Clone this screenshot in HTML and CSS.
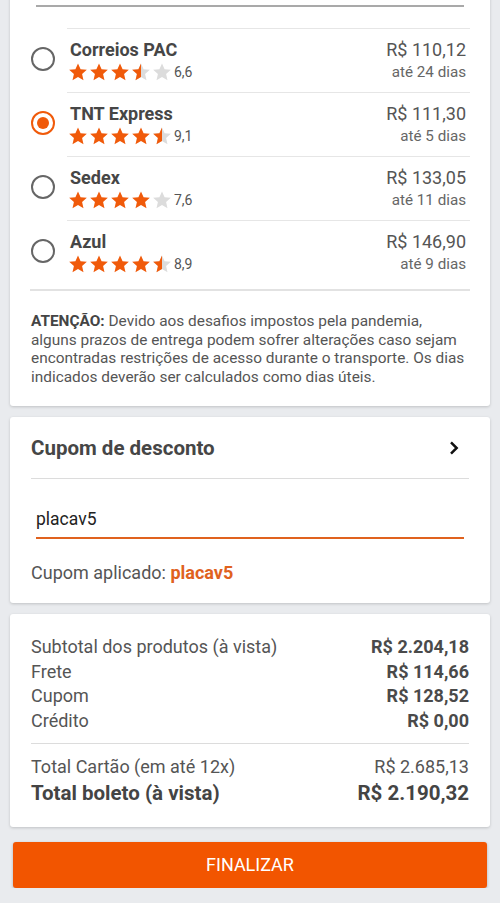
FILE: index.html
```html
<!DOCTYPE html>
<html lang="pt-BR">
<head>
  <meta charset="UTF-8">
  <meta name="viewport" content="width=device-width, initial-scale=1.0">
  <title>Finalizar pedido</title>
  <link rel="stylesheet" href="styles.css">
</head>
<body>

<svg width="0" height="0" class="defs">
  <defs>
    <symbol id="star" viewBox="0 0 24 24">
      <path d="M12 1.8l3.1 6.9 7.5.7-5.7 5 1.7 7.4L12 17.9l-6.6 3.9 1.7-7.4-5.7-5 7.5-.7z"/>
    </symbol>
    <clipPath id="half"><rect x="0" y="0" width="12" height="24"/></clipPath>
  </defs>
</svg>

<div class="page">

  <div class="card shipping">
    <div class="top-line"></div>

    <div class="ship-row">
      <span class="radio"></span>
      <div class="ship-info">
        <div class="ship-left">
          <div class="ship-name">Correios PAC</div>
          <div class="stars">
            <svg class="star on"><use href="#star"/></svg>
            <svg class="star on"><use href="#star"/></svg>
            <svg class="star on"><use href="#star"/></svg>
            <svg class="star half" viewBox="0 0 24 24"><use href="#star" class="off-fill"/><g clip-path="url(#half)"><use href="#star" class="on-fill"/></g></svg>
            <svg class="star"><use href="#star"/></svg>
            <span class="rate">6,6</span>
          </div>
        </div>
        <div class="ship-right">
          <div class="price">R$ 110,12</div>
          <div class="days">até 24 dias</div>
        </div>
      </div>
    </div>

    <div class="ship-row">
      <span class="radio checked"></span>
      <div class="ship-info">
        <div class="ship-left">
          <div class="ship-name">TNT Express</div>
          <div class="stars">
            <svg class="star on"><use href="#star"/></svg>
            <svg class="star on"><use href="#star"/></svg>
            <svg class="star on"><use href="#star"/></svg>
            <svg class="star on"><use href="#star"/></svg>
            <svg class="star half" viewBox="0 0 24 24"><use href="#star" class="off-fill"/><g clip-path="url(#half)"><use href="#star" class="on-fill"/></g></svg>
            <span class="rate">9,1</span>
          </div>
        </div>
        <div class="ship-right">
          <div class="price">R$ 111,30</div>
          <div class="days">até 5 dias</div>
        </div>
      </div>
    </div>

    <div class="ship-row">
      <span class="radio"></span>
      <div class="ship-info">
        <div class="ship-left">
          <div class="ship-name">Sedex</div>
          <div class="stars">
            <svg class="star on"><use href="#star"/></svg>
            <svg class="star on"><use href="#star"/></svg>
            <svg class="star on"><use href="#star"/></svg>
            <svg class="star on"><use href="#star"/></svg>
            <svg class="star"><use href="#star"/></svg>
            <span class="rate">7,6</span>
          </div>
        </div>
        <div class="ship-right">
          <div class="price">R$ 133,05</div>
          <div class="days">até 11 dias</div>
        </div>
      </div>
    </div>

    <div class="ship-row">
      <span class="radio"></span>
      <div class="ship-info">
        <div class="ship-left">
          <div class="ship-name">Azul</div>
          <div class="stars">
            <svg class="star on"><use href="#star"/></svg>
            <svg class="star on"><use href="#star"/></svg>
            <svg class="star on"><use href="#star"/></svg>
            <svg class="star on"><use href="#star"/></svg>
            <svg class="star half" viewBox="0 0 24 24"><use href="#star" class="off-fill"/><g clip-path="url(#half)"><use href="#star" class="on-fill"/></g></svg>
            <span class="rate">8,9</span>
          </div>
        </div>
        <div class="ship-right">
          <div class="price">R$ 146,90</div>
          <div class="days">até 9 dias</div>
        </div>
      </div>
    </div>

    <div class="divider"></div>

    <p class="notice"><b>ATENÇÃO:</b> Devido aos desafios impostos pela pandemia, alguns prazos de entrega podem sofrer alterações caso sejam encontradas restrições de acesso durante o transporte. Os dias indicados deverão ser calculados como dias úteis.</p>
  </div>

  <div class="card coupon">
    <div class="coupon-head">
      <span>Cupom de desconto</span>
      <svg class="chevron" viewBox="0 0 24 24"><path d="M8.4 5.2L15.2 12l-6.8 6.8" fill="none" stroke="#111" stroke-width="3"/></svg>
    </div>
    <div class="coupon-body">
      <input type="text" class="coupon-input" value="placav5">
      <div class="coupon-applied">Cupom aplicado: <b>placav5</b></div>
    </div>
  </div>

  <div class="card summary">
    <div class="sum-row"><span>Subtotal dos produtos (à vista)</span><b>R$ 2.204,18</b></div>
    <div class="sum-row"><span>Frete</span><b>R$ 114,66</b></div>
    <div class="sum-row"><span>Cupom</span><b>R$ 128,52</b></div>
    <div class="sum-row"><span>Crédito</span><b>R$ 0,00</b></div>
    <div class="sum-divider"></div>
    <div class="sum-row"><span>Total Cartão (em até 12x)</span><span>R$ 2.685,13</span></div>
    <div class="sum-row total"><b>Total boleto (à vista)</b><b>R$ 2.190,32</b></div>
  </div>

  <button class="finish">FINALIZAR</button>

</div>

</body>
</html>
```

FILE: styles.css
```css
body {
  margin: 0;
  font-family: Roboto, 'Liberation Sans', sans-serif;
  background-color: #e9ebee;
  color: #4a4a4a;
  overflow: hidden;
}

.defs {
  position: absolute;
}

.page {
  padding: 0 10px;
}

.card {
  background-color: #fff;
  border-radius: 3px;
  box-shadow: 0 1px 3px rgba(0, 0, 0, 0.18);
  margin-bottom: 11px;
}

/* frete */
.shipping {
  margin-top: -10px;
  padding: 15px 20px 0 20px;
}

.top-line {
  height: 2px;
  margin: 0 6px;
  background-color: #a9a9a9;
}

.ship-row {
  display: flex;
  align-items: stretch;
  margin-top: 21px;
}

.ship-row + .ship-row {
  margin-top: 0;
}

.radio {
  flex: none;
  width: 20px;
  height: 20px;
  border: 2px solid #666;
  border-radius: 50%;
  margin: 19px 15px 0 1px;
  box-sizing: content-box;
  position: relative;
}

.radio.checked {
  border-color: #f05a0a;
}

.radio.checked::after {
  content: '';
  position: absolute;
  left: 4px;
  top: 4px;
  width: 12px;
  height: 12px;
  border-radius: 50%;
  background-color: #f05a0a;
}

.ship-info {
  flex: 1;
  display: flex;
  justify-content: space-between;
  border-top: 1px solid #e6e6e6;
  height: 64px;
  padding: 9px 4px 0 3px;
  box-sizing: border-box;
  margin-left: -3px;
}

.ship-name {
  font-size: 18px;
  font-weight: bold;
  color: #464646;
  line-height: 24px;
}

.stars {
  display: flex;
  align-items: center;
  height: 20px;
  margin-left: -2px;
}

.star {
  width: 20px;
  height: 20px;
  margin-right: 1px;
  fill: #dcdcdc;
}

.star.on {
  fill: #f05a0a;
}

.off-fill {
  fill: #dcdcdc;
}

.on-fill {
  fill: #f05a0a;
}

.rate {
  font-size: 14px;
  color: #555;
  margin-left: 1px;
}

.ship-right {
  text-align: right;
}

.price {
  font-size: 18px;
  color: #555;
  line-height: 24px;
}

.days {
  font-size: 15.2px;
  color: #666;
  line-height: 20px;
}

.divider {
  height: 2px;
  margin-top: 5px;
  background-color: #e2e2e2;
}

.notice {
  margin: 0;
  padding: 21px 0 20px 1px;
  font-size: 15.4px;
  line-height: 18.5px;
  color: #555;
}

.notice b {
  color: #444;
}

/* cupom */
.coupon {
  padding: 0 21px;
}

.coupon-head {
  display: flex;
  justify-content: space-between;
  align-items: center;
  height: 61px;
  border-bottom: 1px solid #dcdcdc;
  font-size: 20.5px;
  font-weight: bold;
  color: #464646;
}

.chevron {
  width: 20px;
  height: 20px;
  margin-right: 5px;
}

.coupon-body {
  padding: 25px 5px 0 5px;
}

.coupon-input {
  display: block;
  width: 100%;
  box-sizing: border-box;
  border: none;
  border-bottom: 2px solid #e0621e;
  outline: none;
  padding: 5px 0 8px 0;
  font-family: Roboto, 'Liberation Sans', sans-serif;
  font-size: 17.5px;
  color: #222;
  background: transparent;
}

.coupon-applied {
  margin-left: -5px;
  padding: 23px 0 20px 0;
  font-size: 18px;
  color: #555;
}

.coupon-applied b {
  color: #e0621e;
}

/* resumo */
.summary {
  padding: 21px 21px 20px 21px;
}

.sum-row {
  display: flex;
  justify-content: space-between;
  font-size: 18px;
  line-height: 24.5px;
  color: #555;
}

.sum-row b {
  color: #4a4a4a;
}

.sum-divider {
  height: 1px;
  background-color: #dcdcdc;
  margin: 10px 0 11px 0;
}

.sum-row.total {
  font-size: 20.5px;
  line-height: 27px;
}

.sum-row.total b {
  color: #444;
}

.finish {
  display: block;
  width: 474px;
  height: 46px;
  margin: 15px auto 0 auto;
  border: none;
  border-radius: 3px;
  background-color: #f25500;
  color: #fff;
  font-family: Roboto, 'Liberation Sans', sans-serif;
  font-size: 18px;
  box-shadow: 0 1px 3px rgba(0, 0, 0, 0.25);
  cursor: pointer;
}
```
